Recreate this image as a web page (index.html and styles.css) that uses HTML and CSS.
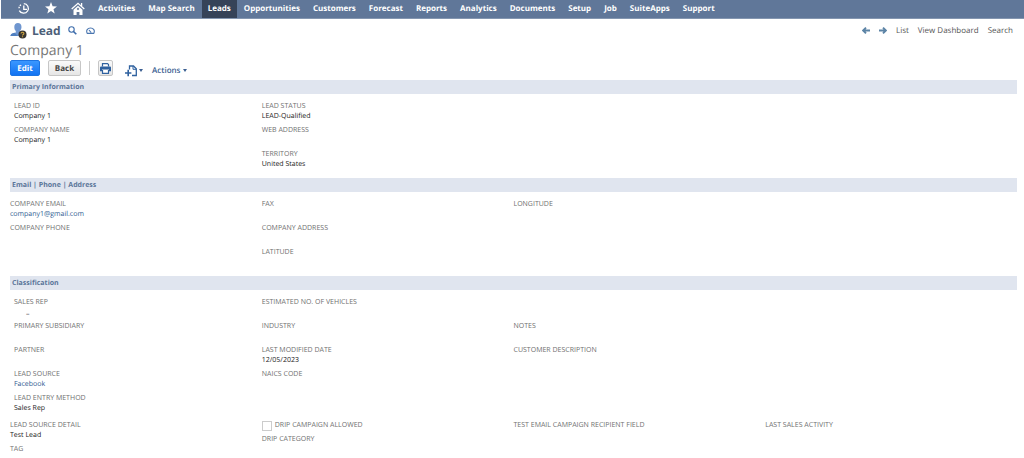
FILE: index.html
```html
<!DOCTYPE html>
<html lang="en">
<head>
<meta charset="utf-8">
<title>Lead - Company 1</title>
<link rel="stylesheet" href="styles.css">
</head>
<body>
<nav class="nav">
  <a class="nav-icon" href="#" aria-label="Recent records"><svg width="12" height="13" viewBox="0 0 12 13" fill="none" stroke="currentColor" stroke-width="1.3"><path d="M5.8 1.6A4.8 4.8 0 1 1 1.3 8.600"/><path d="M5.800 3.600V7.400H9"/><path d="M1 6.200A5 5 0 0 1 3.400 2.400" stroke-dasharray="1.500 1"/></svg></a>
  <a class="nav-icon" href="#" aria-label="Shortcuts"><svg width="12" height="12" viewBox="0 0 12 12" fill="currentColor"><path d="M6 0l1.600 4.200 4.400.2-3.500 2.800L9.700 11.500 6 9.100 2.300 11.500l1.200-4.300L0 4.400l4.400-.2z"/></svg></a>
  <a class="nav-icon" href="#" aria-label="Home"><svg width="14" height="13" viewBox="0 0 14 13"><path d="M.7 7L7 1.300 13.300 7M10.600 1v3" fill="none" stroke="currentColor" stroke-width="1.300"/><path d="M2.500 7.800L7 3.800l4.500 4V13H8.400V10H5.600V13H2.500z" fill="currentColor"/><path d="M7 5.600l1.300 1.300L7 8.200 5.700 6.900z" fill="#607799"/></svg></a>
  <a class="nav-link" href="#">Activities</a>
  <a class="nav-link" href="#">Map Search</a>
  <a class="nav-link active" href="#" aria-current="page">Leads</a>
  <a class="nav-link" href="#">Opportunities</a>
  <a class="nav-link" href="#">Customers</a>
  <a class="nav-link" href="#">Forecast</a>
  <a class="nav-link" href="#">Reports</a>
  <a class="nav-link" href="#">Analytics</a>
  <a class="nav-link" href="#">Documents</a>
  <a class="nav-link" href="#">Setup</a>
  <a class="nav-link" href="#">Job</a>
  <a class="nav-link" href="#">SuiteApps</a>
  <a class="nav-link" href="#">Support</a>
</nav>
<main class="page">
  <header class="head">
    <svg class="avatar" width="17" height="16" viewBox="0 0 17 16"><path d="M4.300 4C4.300 1.500 5.700 0 7.900 0s3.600 1.500 3.600 4c0 2-.8 3.200-1.700 4v1.400c1.700.5 3.700 1.200 3.700 3.600H.5c0-2.400 3.300-3.100 5.300-3.600V8C4.900 7.200 4.300 6 4.300 4z" fill="#6f96cf"/><path d="M.5 13c0-2 2-2.800 4-3.300L8 13z" fill="#4f7fc0"/><circle cx="12.500" cy="11.600" r="4" fill="#393632"/><path d="M11.100 10.600c0-1.900 2.900-1.700 2.800 0 0 .9-1.400.9-1.400 1.900M12.500 13.300v1" fill="none" stroke="#d5a83f" stroke-width="1.100"/></svg>
    <h1 class="title">Lead</h1>
    <a class="head-icon" href="#" aria-label="Find"><svg width="9" height="9" viewBox="0 0 9 9" fill="none" stroke="#3d6cab"><circle cx="3.500" cy="3.500" r="2.700" stroke-width="1.100"/><path d="M5.500 5.500L8.300 8.300" stroke-width="1.600"/></svg></a>
    <a class="head-icon" href="#" aria-label="Dashboard"><svg width="9" height="9" viewBox="0 0 9 9" fill="none" stroke="#4a76b0" stroke-width="1.100"><path d="M1.300 7.400C-.3 4.500 1.500 2 4.500 2S9.300 4.500 7.700 7.400z"/><path d="M3 4L5.200 6.600"/></svg></a>
    <div class="head-links">
      <a href="#" aria-label="Previous"><svg width="8" height="7" viewBox="0 0 8 7"><path d="M8 3.500H2M4 .7L1.200 3.500 4 6.300" fill="none" stroke="#5c84a6" stroke-width="1.900"/></svg></a>
      <a class="next" href="#" aria-label="Next"><svg width="8" height="7" viewBox="0 0 8 7"><path d="M0 3.500H6M4 .7L6.800 3.500 4 6.300" fill="none" stroke="#5c84a6" stroke-width="1.900"/></svg></a>
      <a href="#">List</a>
      <a href="#">View Dashboard</a>
      <a href="#">Search</a>
    </div>
  </header>
  <h2 class="name">Company 1</h2>
  <div class="toolbar">
    <button class="btn primary" type="button">Edit</button>
    <button class="btn" type="button">Back</button>
    <span class="divider"></span>
    <button class="btn print" type="button" aria-label="Print"><svg width="11" height="11" viewBox="0 0 11 11"><path d="M2.500 3.500V.6H7.500L8.500 1.600V3.500M2.500 7V10.400H8.500V7" fill="#fff" stroke="#2f619f" stroke-width="1.200"/><path d="M0 4.500Q0 3.400 1 3.400H10Q11 3.400 11 4.500V8.300H9V6.600H2V8.300H0z" fill="#2f619f"/></svg></button>
    <button class="menu" type="button" aria-label="New record"><svg width="12" height="12" viewBox="0 0 12 12" fill="none" stroke="#2f619f" stroke-width="1.300"><path d="M4.500 4.500V1H8.500L11.300 3.800V10.500H7"/><path d="M8 1V4.300H11.300" stroke-width="1"/><path d="M0 8H6.400M3.200 4.800V11.200" stroke-width="1.600"/></svg><span class="caret"></span></button>
    <button class="menu" type="button">Actions<span class="caret"></span></button>
  </div>

  <section class="section">
    <h3 class="bar">Primary Information</h3>
    <div class="grid">
      <dl class="col inset">
        <div class="field"><dt>LEAD ID</dt><dd>Company 1</dd></div>
        <div class="field"><dt>COMPANY NAME</dt><dd>Company 1</dd></div>
      </dl>
      <dl class="col">
        <div class="field"><dt>LEAD STATUS</dt><dd>LEAD-Qualified</dd></div>
        <div class="field"><dt>WEB ADDRESS</dt><dd></dd></div>
        <div class="field"><dt>TERRITORY</dt><dd>United States</dd></div>
      </dl>
    </div>
  </section>

  <section class="section">
    <h3 class="bar">Email | Phone | Address</h3>
    <div class="grid">
      <dl class="col">
        <div class="field"><dt>COMPANY EMAIL</dt><dd><a href="#">company1@gmail.com</a></dd></div>
        <div class="field"><dt>COMPANY PHONE</dt><dd></dd></div>
      </dl>
      <dl class="col">
        <div class="field"><dt>FAX</dt><dd></dd></div>
        <div class="field"><dt>COMPANY ADDRESS</dt><dd></dd></div>
        <div class="field"><dt>LATITUDE</dt><dd></dd></div>
      </dl>
      <dl class="col">
        <div class="field"><dt>LONGITUDE</dt><dd></dd></div>
      </dl>
    </div>
  </section>

  <section class="section">
    <h3 class="bar">Classification</h3>
    <div class="grid">
      <dl class="col inset">
        <div class="field"><dt>SALES REP</dt><dd class="dash">–</dd></div>
        <div class="field"><dt>PRIMARY SUBSIDIARY</dt><dd></dd></div>
        <div class="field"><dt>PARTNER</dt><dd></dd></div>
        <div class="field"><dt>LEAD SOURCE</dt><dd><a href="#">Facebook</a></dd></div>
        <div class="field"><dt>LEAD ENTRY METHOD</dt><dd>Sales Rep</dd></div>
      </dl>
      <dl class="col">
        <div class="field"><dt>ESTIMATED NO. OF VEHICLES</dt><dd></dd></div>
        <div class="field"><dt>INDUSTRY</dt><dd></dd></div>
        <div class="field"><dt>LAST MODIFIED DATE</dt><dd>12/05/2023</dd></div>
        <div class="field"><dt>NAICS CODE</dt><dd></dd></div>
      </dl>
      <dl class="col skip-row">
        <div class="field"><dt>NOTES</dt><dd></dd></div>
        <div class="field"><dt>CUSTOMER DESCRIPTION</dt><dd></dd></div>
      </dl>
    </div>
    <div class="grid extra">
      <dl class="col">
        <div class="field"><dt>LEAD SOURCE DETAIL</dt><dd>Test Lead</dd></div>
        <div class="field last"><dt>TAG</dt></div>
      </dl>
      <div class="col">
        <div class="check"><input type="checkbox" id="drip"><label for="drip">DRIP CAMPAIGN ALLOWED</label></div>
        <dl class="col"><div class="field last"><dt>DRIP CATEGORY</dt></div></dl>
      </div>
      <dl class="col">
        <div class="field"><dt>TEST EMAIL CAMPAIGN RECIPIENT FIELD</dt><dd></dd></div>
      </dl>
      <dl class="col">
        <div class="field"><dt>LAST SALES ACTIVITY</dt><dd></dd></div>
      </dl>
    </div>
  </section>
</main>
</body>
</html>
```
FILE: styles.css
```css
* { box-sizing: border-box; }
body {
  margin: 0;
  background: #fff;
  color: #333;
  font-family: "Open Sans", "Noto Sans", sans-serif;
  font-size: 8px;
  line-height: 10px;
  text-rendering: geometricPrecision;
}
a { color: inherit; text-decoration: none; }
svg { display: block; }
h1, h2, h3, dl, dd { margin: 0; }
button { font-family: inherit; cursor: pointer; text-rendering: inherit; }

.nav {
  display: flex;
  align-items: stretch;
  gap: 1px;
  height: 19px;
  margin-left: 1px;
  padding-left: 10px;
  background: #607799;
  border-bottom: 1px solid #8496b0;
  color: #fff;
}
.nav-icon {
  display: flex;
  align-items: center;
  justify-content: center;
  width: 26px;
  padding-bottom: 2px;
}
.nav-link {
  padding: 2px 6px 0;
  font-size: 8px;
  font-weight: 700;
  line-height: 13px;
}
.nav-link.active { background: #364358; }

.page { padding: 0 7px 0 10px; }
.head {
  display: flex;
  align-items: center;
  height: 23px;
}
.title {
  margin: 0 7px 0 5px;
  color: #4d5f79;
  font-size: 12px;
  font-weight: 700;
  line-height: 18px;
}
.head-icon { margin-right: 9px; }
.head-links {
  display: flex;
  align-items: center;
  gap: 9px;
  margin-left: auto;
  padding-right: 4px;
  color: #555;
}
.name {
  color: #777;
  font-size: 14px;
  font-weight: 400;
  line-height: 18px;
}
.toolbar {
  display: flex;
  align-items: center;
  height: 20px;
  padding-bottom: 4px;
}
.btn {
  display: flex;
  align-items: center;
  justify-content: center;
  width: 33px;
  height: 16px;
  margin-right: 8px;
  padding: 0;
  border: 1px solid #c6c6c6;
  border-radius: 2px;
  background: linear-gradient(#fafafa, #e6e6e6);
  color: #444;
  font-size: 8px;
  font-weight: 700;
}
.btn.primary {
  width: 30px;
  border-color: #1c74e2;
  background: linear-gradient(#3a97ff, #1273f2);
  color: #fff;
}
.divider {
  width: 1px;
  height: 14px;
  margin-right: 8px;
  background: #ccc;
}
.btn.print { width: 15px; margin-right: 12px; }
.menu {
  display: flex;
  align-items: center;
  gap: 2px;
  margin-right: 9px;
  padding: 5px 0 0;
  border: 0;
  background: none;
  color: #3c5f92;
  font-size: 8px;
  font-weight: 600;
  line-height: 12px;
}
.caret {
  border: 2px solid transparent;
  border-top: 3px solid #3c5f92;
  border-bottom: 0;
}

.section { padding-bottom: 4px; }
.bar {
  padding: 2px 0 0 2px;
  background: #e0e5ef;
  color: #5b7599;
  font-size: 7px;
  font-weight: 700;
  line-height: 12px;
}
.grid {
  display: grid;
  grid-template-columns: repeat(4, 1fr);
  padding-top: 8px;
  font-size: 7px;
}
.grid.extra { padding-top: 3px; }
.inset { padding-left: 4px; }
.skip-row { padding-top: 24px; }
.field { height: 24px; }
.field.last { height: 10px; }
dt, .check { color: #6f6f6f; }
dd { min-height: 10px; color: #222; }
dd a { color: #315d92; }
.dash { padding: 2px 0 0 12px; }
.check {
  display: flex;
  align-items: flex-start;
  gap: 3px;
  height: 14px;
}
.check input {
  appearance: none;
  width: 10px;
  height: 10px;
  margin: 0;
  border: 1px solid #ccc;
  background: #fff;
}
```
